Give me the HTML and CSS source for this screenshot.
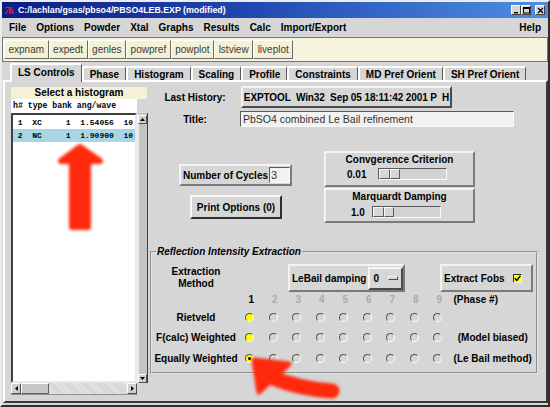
FILE: index.html
```html
<!DOCTYPE html>
<html>
<head>
<meta charset="utf-8">
<link rel="stylesheet" href="styles.css">
</head>
<body>
<div class="window">
  <div class="titlebar">
    <span class="appicon">7k</span>
    <span class="title-text">C:/lachlan/gsas/pbso4/PBSO4LEB.EXP (modified)</span>
    <div class="winbtns">
      <span class="wbtn"><svg width="7" height="7" viewBox="0 0 7 7"><rect x="1" y="5" width="4" height="1.4" fill="#000"/></svg></span>
      <span class="wbtn"><svg width="7" height="7" viewBox="0 0 7 7"><rect x="0.5" y="0.5" width="6" height="5.5" fill="none" stroke="#000" stroke-width="1"/><rect x="0.5" y="0.5" width="6" height="1.5" fill="#000"/></svg></span>
      <span class="wbtn close"><svg width="7" height="7" viewBox="0 0 7 7"><path d="M1 1L6 6M6 1L1 6" stroke="#000" stroke-width="1.3"/></svg></span>
    </div>
  </div>

  <div class="menubar">
    <span class="menu-item">File</span>
    <span class="menu-item">Options</span>
    <span class="menu-item">Powder</span>
    <span class="menu-item">Xtal</span>
    <span class="menu-item">Graphs</span>
    <span class="menu-item">Results</span>
    <span class="menu-item">Calc</span>
    <span class="menu-item">Import/Export</span>
    <span class="menu-item help">Help</span>
  </div>

  <div class="toolbar">
    <span class="tbtn">expnam</span>
    <span class="tbtn">expedt</span>
    <span class="tbtn">genles</span>
    <span class="tbtn">powpref</span>
    <span class="tbtn">powplot</span>
    <span class="tbtn">lstview</span>
    <span class="tbtn">liveplot</span>
  </div>

  <div class="tabs">
    <span class="tab active">LS Controls</span>
    <span class="tab">Phase</span>
    <span class="tab">Histogram</span>
    <span class="tab">Scaling</span>
    <span class="tab">Profile</span>
    <span class="tab">Constraints</span>
    <span class="tab">MD Pref Orient</span>
    <span class="tab">SH Pref Orient</span>
  </div>

  <div class="page">
    <div class="leftpanel">
      <div class="hist-title">Select a histogram</div>
      <div class="hist-grid">
        <div class="hist-head">h# type bank ang/wave</div>
        <div class="hist-head-gap"></div>
        <div class="hist-list">
          <div class="hist-row"> 1  XC     1  1.54056  10</div>
          <div class="hist-row sel"> 2  NC     1  1.90900  10</div>
        </div>
        <div class="vscroll">
          <span class="sb-btn"><svg width="5" height="3" viewBox="0 0 5 3"><path d="M0 3L2.5 0L5 3Z" fill="#000"/></svg></span>
          <span class="vthumb"></span>
          <span class="sb-btn"><svg width="5" height="3" viewBox="0 0 5 3"><path d="M0 0L2.5 3L5 0Z" fill="#000"/></svg></span>
        </div>
        <div class="hscroll">
          <span class="sb-btn"><svg width="3" height="5" viewBox="0 0 3 5"><path d="M3 0L0 2.5L3 5Z" fill="#000"/></svg></span>
          <span class="hthumb"></span>
          <span class="htrough"></span>
          <span class="sb-btn"><svg width="3" height="5" viewBox="0 0 3 5"><path d="M0 0L3 2.5L0 5Z" fill="#000"/></svg></span>
        </div>
      </div>
    </div>

    <div class="rightpanel">
      <div class="field-row history-row">
        <span class="field-label">Last History:</span>
        <span class="history-btn">EXPTOOL  Win32  Sep 05 18:11:42 2001 P  H</span>
      </div>
      <div class="field-row title-row">
        <span class="field-label">Title:</span>
        <span class="entry title-entry">PbSO4 combined Le Bail refinement</span>
      </div>

      <div class="mid">
        <div class="mid-left">
          <div class="frame cycles">
            <span class="cycles-label">Number of Cycles</span>
            <span class="entry cycles-entry">3</span>
          </div>
          <div class="print-btn">Print Options (0)</div>
        </div>
        <div class="mid-right">
          <div class="frame scale-frame conv">
            <div class="scale-title">Convgerence Criterion</div>
            <div class="scale-row">
              <span class="scale-val">0.01</span>
              <span class="trough"><span class="slider-half"></span><span class="slider-half"></span></span>
            </div>
          </div>
          <div class="frame scale-frame marq">
            <div class="scale-title">Marquardt Damping</div>
            <div class="scale-row">
              <span class="scale-val">1.0</span>
              <span class="trough"><span class="slider-half"></span><span class="slider-half"></span></span>
            </div>
          </div>
        </div>
      </div>

      <fieldset class="group">
        <legend>Reflection Intensity Extraction</legend>
        <div class="extr-row">
          <div class="extr-label">Extraction<br>Method</div>
          <div class="frame lebail">
            <span class="nowrap">LeBail damping</span>
            <span class="menubtn">0<span class="mb-ind"></span></span>
          </div>
          <div class="frame fobs">
            <span class="nowrap">Extract Fobs</span>
            <span class="checkbox"><svg width="7" height="7" viewBox="0 0 7 7"><path d="M0.8 3.2L2.8 5.4L6.4 0.8" fill="none" stroke="#000" stroke-width="1.4"/></svg></span>
          </div>
        </div>

        <div class="phase-grid">
          <span></span>
          <span class="pnum on">1</span>
          <span class="pnum">2</span>
          <span class="pnum">3</span>
          <span class="pnum">4</span>
          <span class="pnum">5</span>
          <span class="pnum">6</span>
          <span class="pnum">7</span>
          <span class="pnum">8</span>
          <span class="pnum">9</span>
          <span class="note left">(Phase #)</span>

          <span class="rlabel">Rietveld</span>
          <span class="cell"><span class="radio on"></span></span>
          <span class="cell"><span class="radio"></span></span>
          <span class="cell"><span class="radio"></span></span>
          <span class="cell"><span class="radio"></span></span>
          <span class="cell"><span class="radio"></span></span>
          <span class="cell"><span class="radio"></span></span>
          <span class="cell"><span class="radio"></span></span>
          <span class="cell"><span class="radio"></span></span>
          <span class="cell"><span class="radio"></span></span>
          <span class="note"></span>

          <span class="rlabel">F(calc) Weighted</span>
          <span class="cell"><span class="radio on"></span></span>
          <span class="cell"><span class="radio"></span></span>
          <span class="cell"><span class="radio"></span></span>
          <span class="cell"><span class="radio"></span></span>
          <span class="cell"><span class="radio"></span></span>
          <span class="cell"><span class="radio"></span></span>
          <span class="cell"><span class="radio"></span></span>
          <span class="cell"><span class="radio"></span></span>
          <span class="cell"><span class="radio"></span></span>
          <span class="note">(Model biased)</span>

          <span class="rlabel">Equally Weighted</span>
          <span class="cell"><span class="radio on sel"></span></span>
          <span class="cell"><span class="radio"></span></span>
          <span class="cell"><span class="radio"></span></span>
          <span class="cell"><span class="radio"></span></span>
          <span class="cell"><span class="radio"></span></span>
          <span class="cell"><span class="radio"></span></span>
          <span class="cell"><span class="radio"></span></span>
          <span class="cell"><span class="radio"></span></span>
          <span class="cell"><span class="radio"></span></span>
          <span class="note">(Le Bail method)</span>
        </div>
      </fieldset>
    </div>
  </div>

  <svg class="arrows" width="550" height="407" viewBox="0 0 550 407">
    <defs>
      <filter id="soft" x="-30%" y="-30%" width="160%" height="160%">
        <feGaussianBlur stdDeviation="1.7"/>
      </filter>
    </defs>
    <g fill="#ff2a0c" stroke="#ff2a0c" stroke-linejoin="round" filter="url(#soft)">
      <path d="M80 147 L61 161 L72 161 L72 227 L88 227 L88 161 L100 161 Z" stroke-width="6"/>
      <path d="M254 360 L289 364 L259 392 Z" stroke-width="5"/>
      <path d="M270 377 Q300 389 332 391" fill="none" stroke-width="15" stroke-linecap="round"/>
    </g>
  </svg>
</div>
</body>
</html>
```

FILE: styles.css
```css
* { box-sizing: border-box; }

body {
  margin: 0;
  background: #d6d6d6;
  font-family: "Liberation Sans", Arial, sans-serif;
  font-size: 10px;
  font-weight: bold;
  color: #000;
}

.nowrap { white-space: nowrap; }

.window {
  position: relative;
  width: 550px;
  height: 407px;
  border: 2px solid;
  border-color: #ececec #2e2e2e #2e2e2e #ececec;
  background: #d6d6d6;
  display: flex;
  flex-direction: column;
  overflow: hidden;
}

/* title bar */
.titlebar {
  height: 16px;
  flex: none;
  display: flex;
  align-items: center;
  background: linear-gradient(90deg, #0b1c86 0%, #1f48b0 45%, #4f8fe2 100%);
  color: #fff;
}
.appicon {
  width: 14px;
  padding-left: 2px;
  color: #e8221a;
  font-family: "Liberation Serif", serif;
  font-style: italic;
  font-size: 11px;
  font-weight: bold;
  letter-spacing: -1px;
}
.title-text {
  font-size: 8.8px;
  margin-left: 2px;
}
.winbtns {
  margin-left: auto;
  margin-right: 3px;
  display: flex;
}
.wbtn {
  width: 10px;
  height: 10px;
  background: #d6d6d6;
  border: 1px solid;
  border-color: #fff #404040 #404040 #fff;
  display: flex;
  align-items: center;
  justify-content: center;
}
.wbtn.close { margin-left: 4px; }

/* menu */
.menubar {
  height: 19px;
  flex: none;
  display: flex;
  align-items: center;
  padding-left: 2px;
}
.menu-item { padding: 0 5px; font-size: 10px; }
.menu-item.help { margin-left: auto; margin-right: 2px; }

/* toolbar */
.toolbar {
  height: 25px;
  flex: none;
  display: flex;
  padding: 2px 1px;
  background: #f6f4dc;
  border: 1px solid #777;
}
.tbtn {
  display: flex;
  align-items: center;
  padding: 0 3.5px;
  font-weight: normal;
  font-size: 10px;
  color: #3a3a3a;
  background: #f4f2d6;
  border: 1px solid;
  border-color: #fff #6a6a6a #6a6a6a #fff;
}

/* tabs */
.tabs {
  height: 17px;
  flex: none;
  margin-top: 1px;
  padding-left: 8px;
  display: flex;
  align-items: flex-end;
}
.tab {
  height: 14px;
  display: flex;
  align-items: center;
  padding: 0 6px;
  border: 2px solid;
  border-right-width: 1px;
  border-bottom: none;
  border-color: #fff #5a5a5a transparent #fff;
  border-radius: 2px 2px 0 0;
  font-size: 10px;
}
.tab.active {
  height: 19px;
  margin-bottom: -2px;
  padding-bottom: 3px;
  position: relative;
  z-index: 1;
  background: #d6d6d6;
}

/* page */
.page {
  flex: 1;
  margin: 0 0 2px 1px;
  border: 2px solid;
  border-color: #fff #3a3a3a #3a3a3a #fff;
  display: flex;
}

/* left panel */
.leftpanel {
  width: 145px;
  flex: none;
  padding: 5px 0 0 6px;
}
.hist-title {
  width: 136px;
  height: 12px;
  line-height: 12px;
  text-align: center;
  background: #f4f2d6;
  font-size: 10px;
}
.hist-grid {
  display: grid;
  grid-template-columns: 126px 11px;
  grid-template-rows: 14px 270px 12px;
}
.hist-head {
  background: #fff;
  font-family: "Liberation Mono", monospace;
  font-size: 8.2px;
  line-height: 14px;
  padding-left: 2px;
  white-space: pre;
  overflow: hidden;
}
.hist-list {
  background: #fff;
  border: 2px solid;
  border-color: #404040 #e8e8e8 #e8e8e8 #404040;
  padding-top: 1px;
  overflow: hidden;
}
.hist-row {
  height: 13px;
  line-height: 13px;
  font-family: "Liberation Mono", monospace;
  font-size: 8px;
  white-space: pre;
  overflow: hidden;
}
.hist-row.sel { background: #a9d6e6; }

.vscroll {
  display: flex;
  flex-direction: column;
  background: #c4c4c4;
  border-right: 1px solid #404040;
  border-left: 1px solid #f0f0f0;
  padding-top: 2px;
}
.sb-btn {
  flex: none;
  width: 10px;
  height: 10px;
  display: flex;
  align-items: center;
  justify-content: center;
  background: #d0d0d0;
  border: 1px solid;
  border-color: #fff #505050 #505050 #fff;
}
.vscroll .sb-btn { width: 9px; height: 9px; }
.vthumb {
  flex: 1;
  background: #c4c4c4;
  border-left: 1px solid #e6e6e6;
}
.hscroll {
  display: flex;
  background: #e2e2e2;
  border-bottom: 1px solid #909090;
}
.hscroll .sb-btn { height: 11px; }
.hthumb {
  width: 28px;
  background: #c8c8c8;
  border: 1px solid;
  border-color: #fff #606060 #606060 #fff;
}
.htrough {
  flex: 1;
  background: repeating-linear-gradient(45deg, #e6e6e6 0 1px, #d2d2d2 1px 2px);
}

/* right panel */
.rightpanel {
  flex: 1;
  padding-top: 4px;
  display: flex;
  flex-direction: column;
}
.field-row { display: flex; align-items: center; }
.field-label { width: 90px; text-align: center; font-size: 10px; }
.history-row { height: 22px; }
.history-btn {
  margin-left: 1px;
  width: 211px;
  height: 22px;
  display: flex;
  align-items: center;
  justify-content: center;
  white-space: pre;
  letter-spacing: -0.1px;
  border: 2px solid;
  border-color: #f4f4f4 #4a4a4a #4a4a4a #f4f4f4;
}
.title-row { margin-top: 3px; height: 16px; }
.entry {
  background: #f1f1f1;
  border: 1px solid;
  border-color: #5a5a5a #fafafa #fafafa #5a5a5a;
  font-weight: normal;
  font-size: 10.5px;
  color: #333;
  display: flex;
  align-items: center;
}
.title-entry {
  width: 274px;
  height: 16px;
  padding-left: 2px;
}

.mid { height: 119px; display: flex; }
.mid-left { width: 174px; flex: none; padding-top: 37px; }
.frame {
  border: 2px solid;
  border-color: #f4f4f4 #7a7a7a #7a7a7a #f4f4f4;
}
.cycles {
  margin-left: 29px;
  width: 113px;
  height: 22px;
  display: flex;
  align-items: center;
  padding-left: 2px;
}
.cycles-label { white-space: nowrap; }
.cycles-entry {
  flex: none;
  margin-left: 1px;
  width: 21px;
  height: 16px;
  padding-left: 1px;
  font-size: 11px;
}
.print-btn {
  margin: 9px 0 0 40px;
  width: 92px;
  height: 24px;
  display: flex;
  align-items: center;
  justify-content: center;
  border: 2px solid;
  border-color: #f8f8f8 #2e2e2e #2e2e2e #f8f8f8;
}

.mid-right { padding-top: 24px; }
.scale-frame { width: 151px; padding-top: 1px; }
.conv { height: 36px; }
.marq { height: 35px; margin-top: 1px; }
.scale-title { text-align: center; line-height: 12px; }
.scale-row { display: flex; align-items: center; margin-top: 2px; }
.conv .scale-row { padding-left: 21px; }
.marq .scale-row { padding-left: 25px; margin-top: 3px; }
.conv .scale-val { width: 31px; }
.marq .scale-val { width: 21px; }
.trough {
  width: 69px;
  height: 12px;
  display: flex;
  border: 1px solid;
  border-color: #5a5a5a #fafafa #fafafa #5a5a5a;
  background: #d2d2d2;
}
.slider-half {
  width: 10.5px;
  border: 1px solid;
  border-color: #fafafa #5a5a5a #5a5a5a #fafafa;
  background: #d6d6d6;
}

/* group */
.group {
  margin: 0 8px 0 0;
  padding: 6px 0 3px 0;
  border: 2px groove #e4e4e4;
  min-width: 0;
}
.group legend {
  margin-left: 4px;
  padding: 0 1px;
  font-style: italic;
  font-size: 10px;
  line-height: 12px;
}
.extr-row { display: flex; align-items: center; height: 28px; }
.extr-label {
  width: 86px;
  padding-left: 2px;
  text-align: center;
  line-height: 12px;
}
.lebail {
  flex: none;
  margin-left: 50px;
  width: 117px;
  height: 28px;
  display: flex;
  align-items: center;
  padding-left: 2px;
}
.menubtn {
  flex: none;
  margin-left: 2px;
  width: 35px;
  height: 23px;
  display: flex;
  align-items: center;
  padding-left: 3px;
  border: 2px solid;
  border-color: #f4f4f4 #4a4a4a #4a4a4a #f4f4f4;
}
.mb-ind {
  margin-left: 9px;
  width: 10px;
  height: 4px;
  border: 1px solid;
  border-color: #f4f4f4 #4a4a4a #4a4a4a #f4f4f4;
}
.fobs {
  flex: none;
  margin-left: 35px;
  width: 93px;
  height: 28px;
  display: flex;
  align-items: center;
  padding-left: 2px;
}
.checkbox {
  flex: none;
  margin-left: 8px;
  width: 9px;
  height: 9px;
  background: #ffff00;
  border: 1px solid;
  border-color: #303030 #f4f4f4 #f4f4f4 #303030;
  display: flex;
  align-items: center;
  justify-content: center;
}

.phase-grid {
  display: grid;
  grid-template-columns: 86px repeat(9, 23.5px) 1fr;
  grid-template-rows: 15px repeat(3, 20.5px);
  align-items: center;
}
.pnum {
  text-align: center;
  padding-left: 3px;
  color: #ababab;
}
.pnum.on { color: #000; }
.rlabel { text-align: center; padding-left: 2px; white-space: nowrap; }
.cell { display: flex; justify-content: center; }
.note { text-align: center; white-space: nowrap; }
.note.left { text-align: left; padding-left: 4px; }
.radio {
  width: 9px;
  height: 9px;
  border-radius: 50%;
  border: 1px solid;
  border-color: #555 #fafafa #fafafa #555;
  background: #d6d6d6;
  display: flex;
  align-items: center;
  justify-content: center;
}
.radio.on { background: #ffff00; }
.radio.sel::after {
  content: "";
  width: 3px;
  height: 3px;
  border-radius: 50%;
  background: #000;
}

/* overlay red arrows */
.arrows {
  position: absolute;
  left: -2px;
  top: -2px;
  pointer-events: none;
}
```
